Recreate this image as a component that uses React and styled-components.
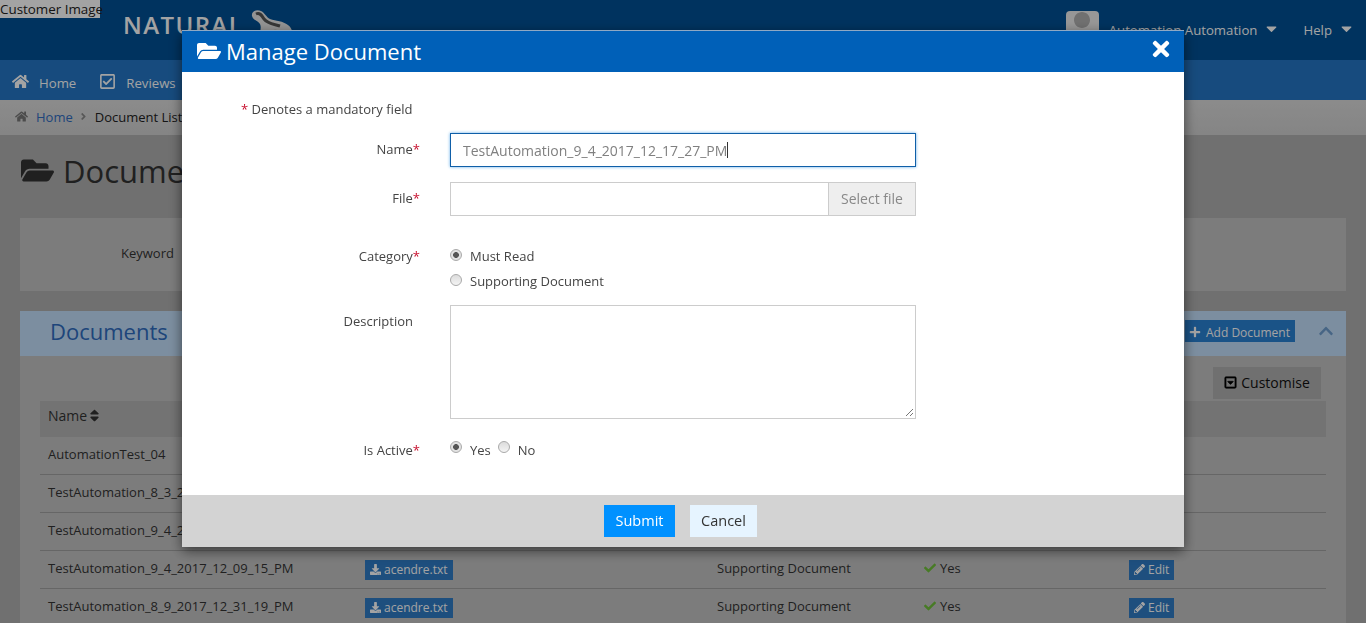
import React from 'react';
import styled, { createGlobalStyle } from 'styled-components';
import {
  FaFolderOpen, FaHome, FaRegCheckSquare, FaTimes, FaCaretDown, FaSort, FaPlus,
  FaChevronUp, FaDownload, FaPencilAlt, FaCheck, FaRegCaretSquareDown, FaUser, FaAngleRight,
} from 'react-icons/fa';

const GlobalStyle = createGlobalStyle`
  html, body { margin: 0; padding: 0; height: 100%; overflow: hidden; }
  body { font-family: "Open Sans", "Liberation Sans", sans-serif; background: #afafaf; color: #333; }
  * { box-sizing: border-box; }
`;

const Page = styled.div`
  width: 1366px;
  height: 623px;
  overflow: hidden;
`;

const TopBar = styled.header`
  height: 60px;
  background: #005095;
  display: flex;
  align-items: flex-start;
`;

const CustomerImage = styled.span`
  height: 18px;
  width: 100px;
  background: #fff;
  color: #222;
  font-size: 13.4px;
  line-height: 18px;
  white-space: nowrap;
`;

const Logo = styled.div`
  margin-left: 23px;
  margin-top: 8px;
  display: flex;
  align-items: flex-start;
  color: #fff;
  font-size: 24px;
  font-weight: 600;
  line-height: 34px;
  letter-spacing: 1.4px;
  gap: 6px;
`;

const UserBlock = styled.div`
  margin-left: auto;
  display: flex;
  align-items: center;
  height: 60px;
  color: #fff;
  font-size: 13.2px;
  padding-right: 11px;
`;

const Avatar = styled.div`
  width: 33px;
  height: 40px;
  background: #ececec;
  color: #b0b0b0;
  border-radius: 4px;
  font-size: 32px;
  overflow: hidden;
  display: flex;
  justify-content: center;
  padding-top: 1px;
  margin-right: 10px;
  margin-top: 2px;
`;

const UserLink = styled.span`
  display: flex;
  align-items: center;
  gap: 6px;
  margin-left: ${(p) => p.$gap || 0}px;
  svg { font-size: 17px; margin-top: -3px; }
`;

const NavBar = styled.nav`
  height: 40px;
  background: #2476c5;
  display: flex;
  align-items: center;
  padding: 6px 0 0 12px;
  gap: 23px;
`;

const NavItem = styled.span`
  display: flex;
  align-items: center;
  gap: 10px;
  color: #fff;
  font-size: 13.2px;
  svg { font-size: 17px; margin-top: -3px; }
`;

const Breadcrumb = styled.div`
  height: 35px;
  background: linear-gradient(#dadada, #d0d0d0);
  display: flex;
  align-items: center;
  padding: 0 0 2px 15px;
  font-size: 13px;
  color: #222;
  gap: 8px;
  svg { color: #777; font-size: 13px; }
`;

const Crumb = styled.span`
  color: #2f6cc0;
`;

const Divider = styled.span`
  display: flex;
  margin: 0 -2px 0 -3px;
  svg { font-size: 11px; color: #888; }
`;

const Heading = styled.h1`
  margin: 0;
  height: 83px;
  padding: 0 0 12px 21px;
  display: flex;
  align-items: center;
  gap: 9px;
  font-weight: 400;
  font-size: 31px;
  color: #333;
  svg { font-size: 33px; }
`;

const FilterPanel = styled.section`
  margin: 0 20px;
  height: 73px;
  background: #c3c3c3;
  padding: 26px 0 0 101px;
  font-size: 13px;
`;

const DocPanel = styled.section`
  margin: 20px 20px 0;
  background: #c3c3c3;
  height: 400px;
`;

const DocHeader = styled.div`
  height: 45px;
  background: #c3dffa;
  display: flex;
  align-items: center;
  padding: 0 12px 5px 30px;
  color: #2f6cc0;
  font-size: 22px;
`;

const AddButton = styled.button`
  margin-left: auto;
  height: 22px;
  width: 110px;
  border: 0;
  background: #2a82d3;
  color: #fff;
  font: 12px "Open Sans", sans-serif;
  display: flex;
  align-items: center;
  gap: 5px;
  padding: 2px 4px 0;
  white-space: nowrap;
  svg { font-size: 12px; }
`;

const Collapse = styled.span`
  margin-left: 23px;
  font-size: 16px;
  color: #6f9fd0;
  display: flex;
`;

const TableArea = styled.div`
  padding: 11px 20px 0;
`;

const CustomiseRow = styled.div`
  display: flex;
  justify-content: flex-end;
  padding-right: 5px;
  margin-bottom: 2px;
`;

const Customise = styled.button`
  width: 108px;
  height: 32px;
  border: 0;
  background: #b0b0b0;
  color: #111;
  font: 14px "Open Sans", sans-serif;
  display: flex;
  align-items: center;
  justify-content: center;
  gap: 4px;
  padding: 0 0 2px;
  svg { font-size: 13px; color: #000; stroke: #000; stroke-width: 24px; }
`;

const Row = styled.div`
  display: grid;
  grid-template-columns: 317px 352px 207px 205px 1fr;
  align-items: center;
  height: ${(p) => (p.$head ? 36 : 38)}px;
  padding: 0 0 ${(p) => (p.$head ? 7 : 3)}px 8px;
  font-size: 13px;
  color: #333;
  background: ${(p) => (p.$head ? '#b5b5b5' : 'transparent')};
  border-bottom: ${(p) => (p.$head ? 0 : '1px solid #a0a0a0')};
  svg { font-size: 12px; }
`;

const Sortable = styled.span`
  display: flex;
  align-items: center;
  gap: 0;
  font-size: 14px;
  svg { font-size: 15px; }
`;

const SmallButton = styled.span`
  display: inline-flex;
  align-items: center;
  gap: 3px;
  width: fit-content;
  height: 20px;
  padding: 0 5px;
  margin-top: 3px;
  background: #2f7cc6;
  color: #fff;
  font-size: 12px;
  svg { font-size: 11px; }
`;

const Yes = styled.span`
  display: flex;
  align-items: center;
  gap: 4px;
  svg { color: #6fc03a; }
`;

const Backdrop = styled.div`
  position: fixed;
  inset: 0;
  z-index: 10;
  background: rgba(0, 0, 0, 0.36);
`;

const Modal = styled.div`
  position: fixed;
  z-index: 11;
  left: 182px;
  top: 30px;
  width: 1002px;
  height: 517px;
  background: #fff;
  border-top: 1px solid #8fa9c4;
  box-shadow: 0 4px 12px rgba(0, 0, 0, 0.55);
  display: flex;
  flex-direction: column;
`;

const ModalHead = styled.div`
  height: 41px;
  flex: none;
  background: #0060b8;
  color: #fff;
  display: flex;
  align-items: center;
  padding: 0 11px 2px 15px;
  gap: 5px;
  font-size: 22px;
  svg { font-size: 24px; }
`;

const CloseIcon = styled.span`
  margin-left: auto;
  display: flex;
  margin-top: -4px;
  svg { font-size: 24px; }
`;

const ModalBody = styled.div`
  flex: 1;
  padding: 28px 0 0;
  font-size: 13px;
  color: #444;
`;

const Note = styled.p`
  margin: 0 0 14px 59px;
  height: 19px;
  line-height: 19px;
`;

const Star = styled.span`
  color: #c8102e;
`;

const FormGrid = styled.div`
  display: grid;
  grid-template-columns: 238px 466px;
  column-gap: 30px;
`;

const Label = styled.label`
  text-align: right;
  line-height: 18px;
  padding-top: ${(p) => p.$top || 0}px;
  padding-right: ${(p) => p.$right || 0}px;
`;

const NameBox = styled.div`
  height: 34px;
  border: 1px solid #0f5fa8;
  box-shadow: 0 0 3px #66afe9;
  display: flex;
  align-items: center;
  padding-left: 12px;
  color: #808080;
  font-size: 14px;
  margin-bottom: 15px;
`;

const Caret = styled.span`
  width: 1px;
  height: 16px;
  background: #333;
`;

const FileBox = styled.div`
  height: 34px;
  border: 1px solid #ccc;
  display: flex;
  justify-content: flex-end;
  margin-bottom: 31px;
`;

const SelectFile = styled.span`
  width: 87px;
  background: #eee;
  border-left: 1px solid #ccc;
  color: #888;
  display: flex;
  align-items: center;
  justify-content: center;
  font-size: 14px;
  padding-bottom: 2px;
`;

const RadioStack = styled.div`
  display: flex;
  flex-direction: column;
  gap: 7px;
  margin-bottom: 15px;
`;

const RadioLine = styled.label`
  display: flex;
  align-items: center;
  height: 18px;
`;

const Radio = styled.input.attrs({ type: 'radio', readOnly: true })`
  appearance: none;
  margin: ${(p) => (p.$raised ? -6 : -3)}px 8px 0 ${(p) => p.$left || 0}px;
  width: 12px;
  height: 12px;
  border-radius: 50%;
  border: 1px solid #a9a9a9;
  background: ${(p) => (p.defaultChecked
    ? 'radial-gradient(circle, #555 0 2.6px, #e2e2e2 3.2px)'
    : 'linear-gradient(#dcdcdc, #f4f4f4)')};
`;

const Description = styled.div`
  height: 114px;
  border: 1px solid #ccc;
  margin-bottom: 22px;
  position: relative;
`;

const Grip = styled.svg`
  position: absolute;
  right: 1px;
  bottom: 1px;
`;

const InlineRadios = styled.div`
  display: flex;
  align-items: center;
  height: 18px;
`;

const Footer = styled.div`
  height: 52px;
  flex: none;
  background: #d3d3d3;
  display: flex;
  justify-content: center;
  align-items: center;
  gap: 15px;
  padding-right: 5px;
`;

const FootButton = styled.button`
  height: 32px;
  width: ${(p) => (p.$primary ? 71 : 67)}px;
  border: 0;
  background: ${(p) => (p.$primary ? '#0091ff' : '#e6f4ff')};
  color: ${(p) => (p.$primary ? '#fff' : '#333')};
  font: 14.5px "Open Sans", sans-serif;
  padding: 0 0 2px;
`;

const rows = [
  { name: 'AutomationTest_04', file: 'acendre.txt', category: 'Must Read' },
  { name: 'TestAutomation_8_3_2017_12_40_11_PM', file: 'acendre.txt', category: 'Must Read' },
  { name: 'TestAutomation_9_4_2017_12_14_02_PM', file: 'acendre.txt', category: 'Must Read' },
  { name: 'TestAutomation_9_4_2017_12_09_15_PM', file: 'acendre.txt', category: 'Supporting Document' },
  { name: 'TestAutomation_8_9_2017_12_31_19_PM', file: 'acendre.txt', category: 'Supporting Document' },
];

function LogoBlob() {
  return (
    <svg width="46" height="30" viewBox="0 0 46 30">
      <path d="M3 8c-1-5 5-7 9-5 4 2 5 6 9 8 6 2 13 2 18 6 4 3 5 7 4 13H12c-2-6 1-10-1-14-2-3-7-4-8-8z" fill="#e8e8e8" />
      <path d="M7 6c4-2 6 2 8 5 4 5 10 5 16 7" fill="none" stroke="#555" strokeWidth="3" />
      <path d="M16 26c6-4 14-4 22 0" fill="none" stroke="#999" strokeWidth="2" />
    </svg>
  );
}

export default function App() {
  return (
    <Page>
      <GlobalStyle />
      <TopBar>
        <CustomerImage>Customer Image</CustomerImage>
        <Logo>NATURAL<LogoBlob /></Logo>
        <UserBlock>
          <Avatar><FaUser /></Avatar>
          <UserLink>Automation Automation <FaCaretDown /></UserLink>
          <UserLink $gap={23}>Help <FaCaretDown /></UserLink>
        </UserBlock>
      </TopBar>
      <NavBar>
        <NavItem><FaHome /> Home</NavItem>
        <NavItem><FaRegCheckSquare /> Reviews</NavItem>
      </NavBar>
      <Breadcrumb>
        <FaHome /> <Crumb>Home</Crumb> <Divider><FaAngleRight /></Divider> Document List
      </Breadcrumb>
      <Heading><FaFolderOpen /> Documents</Heading>
      <FilterPanel>Keyword</FilterPanel>
      <DocPanel>
        <DocHeader>
          Documents
          <AddButton><FaPlus /> Add Document</AddButton>
          <Collapse><FaChevronUp /></Collapse>
        </DocHeader>
        <TableArea>
          <CustomiseRow>
            <Customise><FaRegCaretSquareDown /> Customise</Customise>
          </CustomiseRow>
          <Row $head>
            <Sortable>Name <FaSort /></Sortable>
          </Row>
          {rows.map((r) => (
            <Row key={r.name}>
              <span>{r.name}</span>
              <SmallButton><FaDownload /> {r.file}</SmallButton>
              <span>{r.category}</span>
              <Yes><FaCheck /> Yes</Yes>
              <SmallButton><FaPencilAlt /> Edit</SmallButton>
            </Row>
          ))}
        </TableArea>
      </DocPanel>

      <Backdrop />
      <Modal>
        <ModalHead>
          <FaFolderOpen /> Manage Document
          <CloseIcon><FaTimes /></CloseIcon>
        </ModalHead>
        <ModalBody>
          <Note><Star>*</Star> Denotes a mandatory field</Note>
          <FormGrid>
            <Label $top={7}>Name<Star>*</Star></Label>
            <NameBox>TestAutomation_9_4_2017_12_17_27_PM<Caret /></NameBox>
            <Label $top={7}>File<Star>*</Star></Label>
            <FileBox><SelectFile>Select file</SelectFile></FileBox>
            <Label>Category<Star>*</Star></Label>
            <RadioStack>
              <RadioLine><Radio name="category" defaultChecked />Must Read</RadioLine>
              <RadioLine><Radio name="category" />Supporting Document</RadioLine>
            </RadioStack>
            <Label $top={7} $right={7}>Description</Label>
            <Description>
              <Grip width="10" height="10" viewBox="0 0 10 10">
                <path d="M9 2L2 9M9 6L6 9" stroke="#777" strokeWidth="1" />
              </Grip>
            </Description>
            <Label>Is Active<Star>*</Star></Label>
            <InlineRadios>
              <Radio name="active" defaultChecked $raised />
              <span>Yes</span>
              <Radio name="active" $raised $left={7} />
              <span>No</span>
            </InlineRadios>
          </FormGrid>
        </ModalBody>
        <Footer>
          <FootButton $primary>Submit</FootButton>
          <FootButton>Cancel</FootButton>
        </Footer>
      </Modal>
    </Page>
  );
}
